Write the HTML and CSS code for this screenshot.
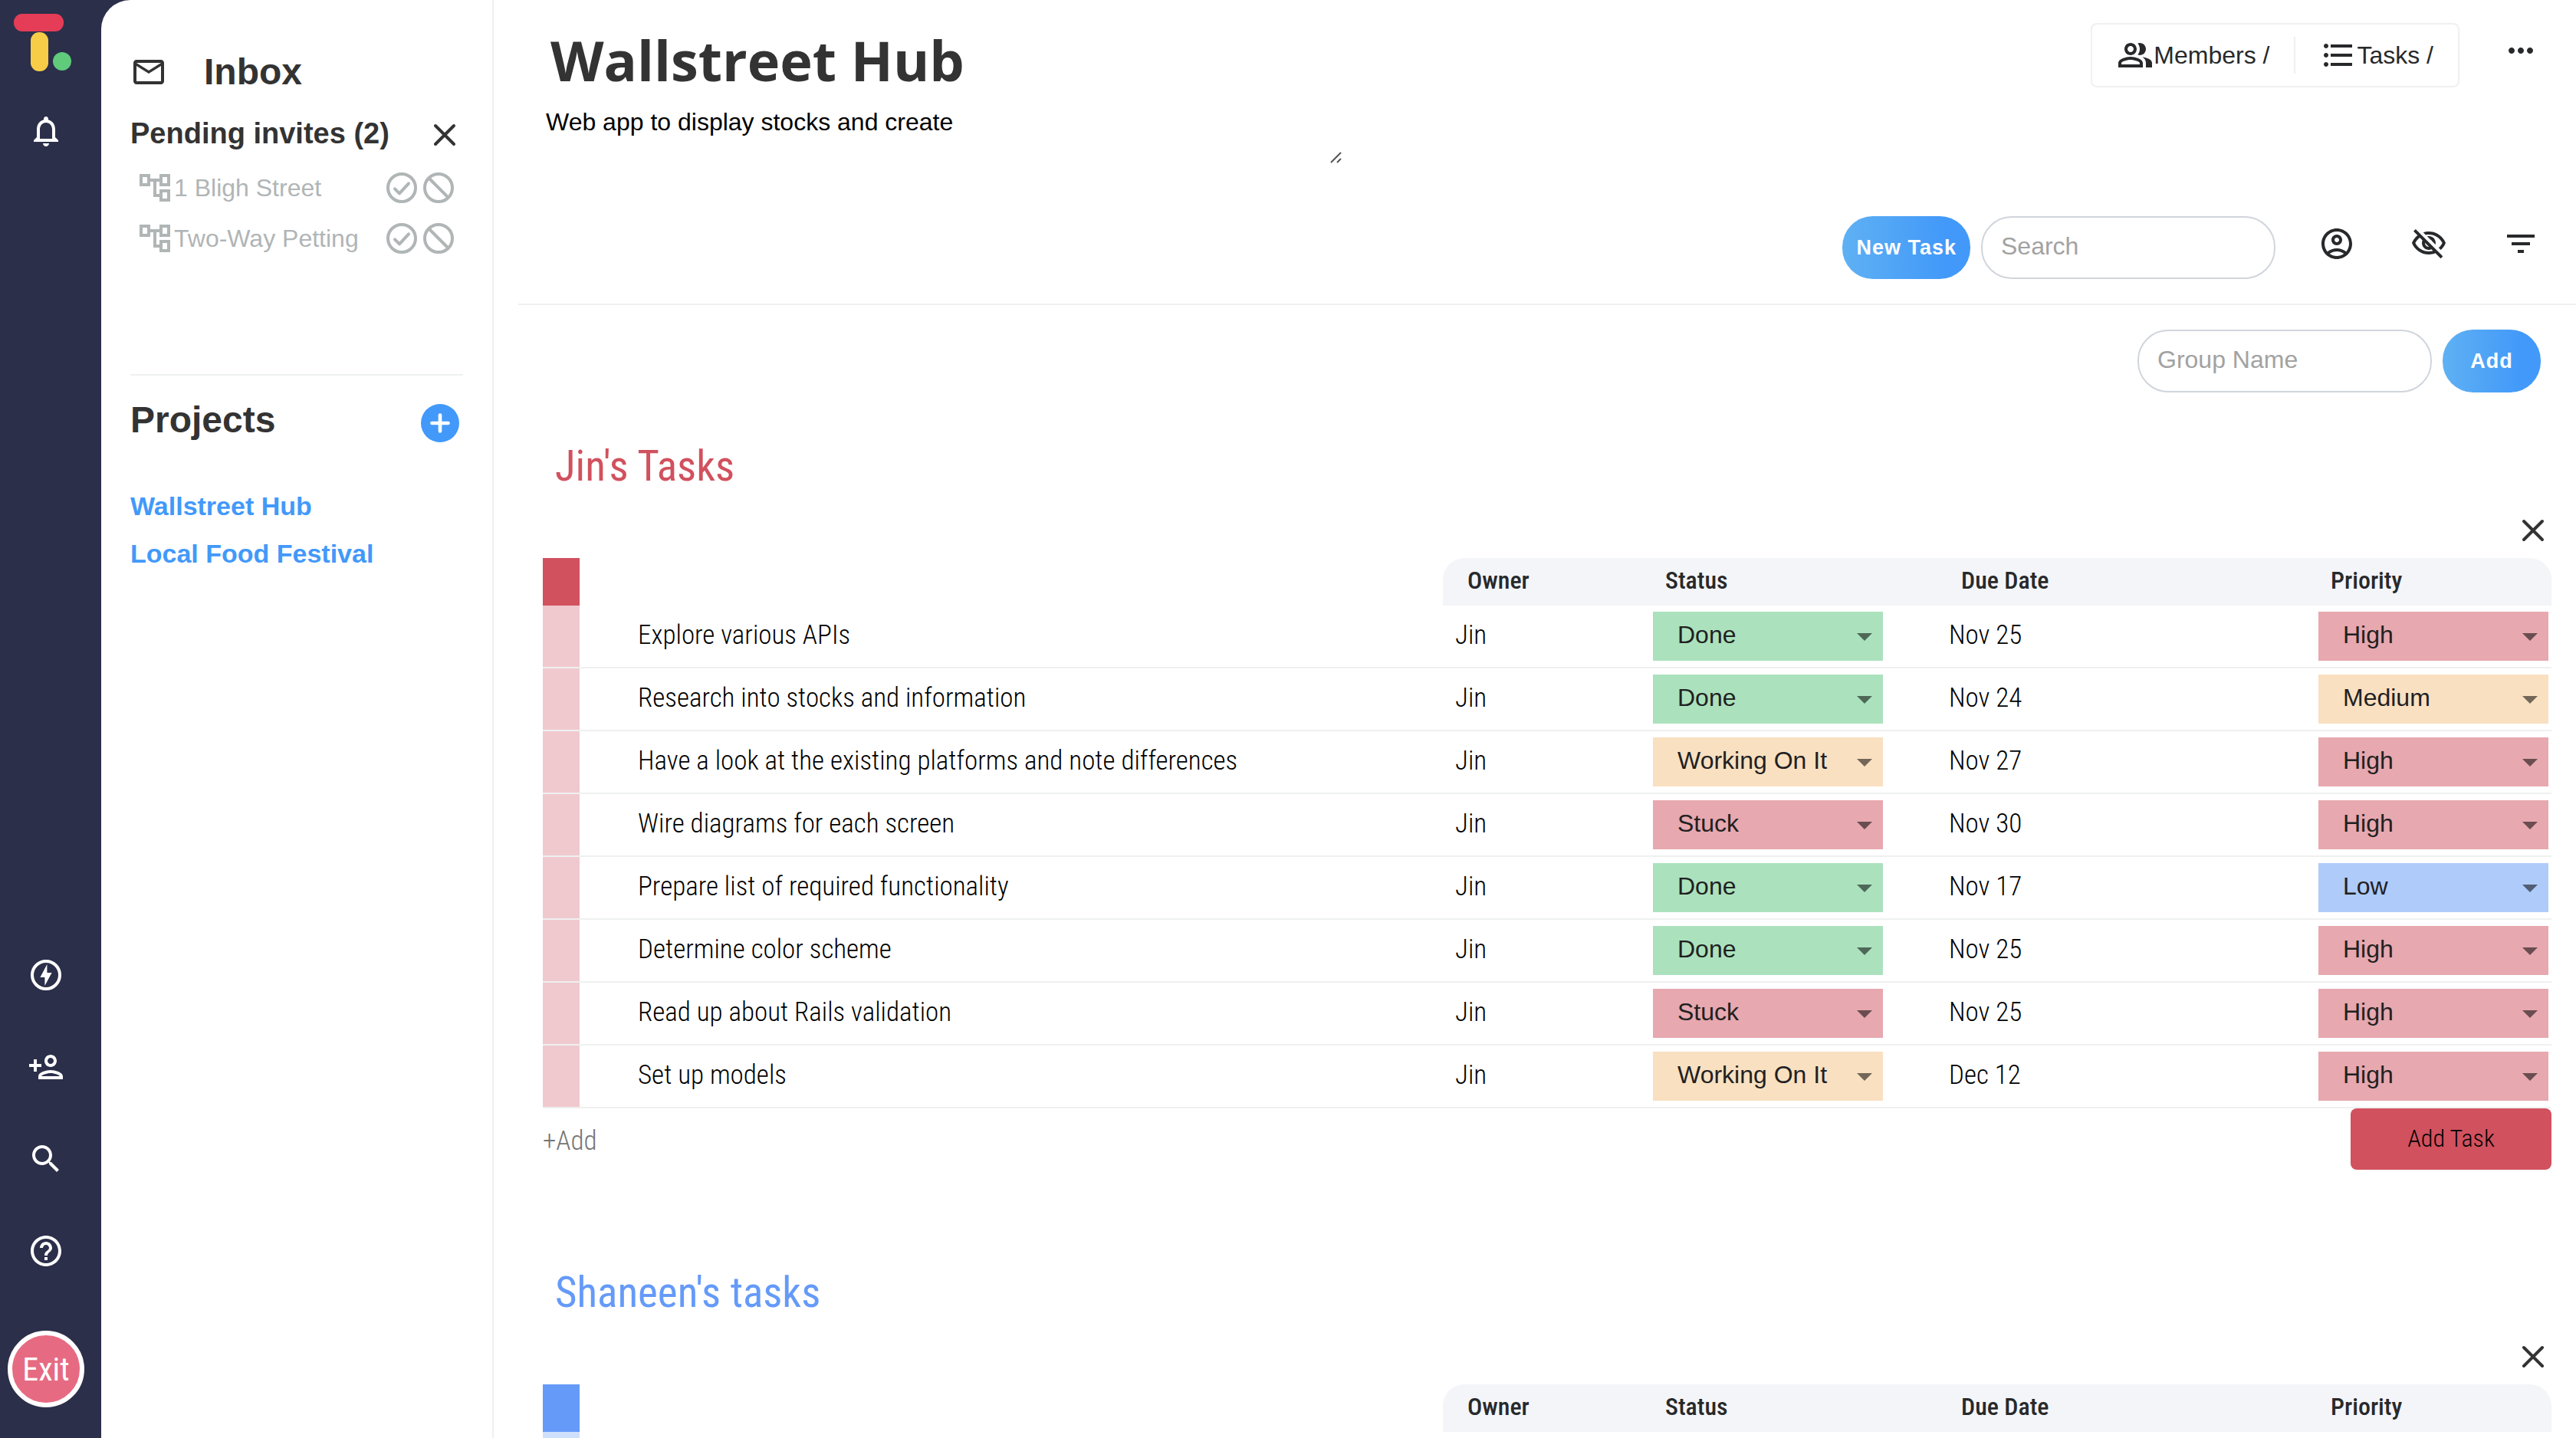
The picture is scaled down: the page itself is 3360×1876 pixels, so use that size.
FILE: index.html
```html
<!DOCTYPE html>
<html lang="en">
<head>
<meta charset="utf-8">
<title>Wallstreet Hub</title>
<meta name="viewport" content="width=device-width, initial-scale=1">
<link rel="stylesheet" href="styles.css">
</head>
<body>
<svg class="sprite" aria-hidden="true">
  <symbol id="close" viewBox="0 0 24 24"><path d="M6 6l12 12M18 6L6 18" fill="none" stroke="currentColor" stroke-width="2" stroke-linecap="round"/></symbol>
  <symbol id="tree" viewBox="0 0 24 24"><path d="M22 11V3h-7v3H9V3H2v8h7V8h2v10h4v3h7v-8h-7v3h-2V8h2v3h7zM7 9H4V5h3v4zm10 6h3v4h-3v-4zm0-10h3v4h-3V5z"/></symbol>
  <symbol id="accept" viewBox="0 0 24 24"><g fill="none" stroke="currentColor" stroke-width="2"><circle cx="12" cy="12" r="9"/><path d="M7.500 12.700l3 3 6-6.500" stroke-linecap="round" stroke-linejoin="round"/></g></symbol>
  <symbol id="decline" viewBox="0 0 24 24"><g fill="none" stroke="currentColor" stroke-width="2"><circle cx="12" cy="12" r="9"/><path d="M5.640 5.640l12.720 12.720"/></g></symbol>
</svg>
<div class="app">
  <nav class="rail" aria-label="Main">
    <svg class="logo" viewBox="0 0 80 80" role="img" aria-label="Logo">
      <rect x="0" y="2" width="65" height="23" rx="11" fill="#e53d57"/>
      <rect x="22" y="26" width="23" height="51" rx="11" fill="#f7cd48"/>
      <circle cx="63" cy="64" r="12" fill="#5fcb7b"/>
    </svg>
    <button class="icon-btn bell" aria-label="Notifications"><svg viewBox="0 0 24 24"><path d="M12 22c1.100 0 2-.9 2-2h-4c0 1.100.9 2 2 2zm6-6v-5c0-3.070-1.630-5.640-4.500-6.320V4c0-.83-.67-1.500-1.500-1.500s-1.500.67-1.500 1.500v.68C7.640 5.360 6 7.920 6 11v5l-2 2v1h16v-1l-2-2zm-2 1H8v-6c0-2.480 1.510-4.500 4-4.500s4 2.020 4 4.500v6z"/></svg></button>
    <div class="rail-bottom">
      <button class="icon-btn" aria-label="Activity"><svg viewBox="0 0 24 24"><circle cx="12" cy="12" r="9" fill="none" stroke="currentColor" stroke-width="2"/><path d="M12.700 5L8.200 13.500h3V19l4.600-8.500h-3.100z"/></svg></button>
      <button class="icon-btn" aria-label="Invite"><svg viewBox="0 0 24 24"><path d="M15 12c2.210 0 4-1.790 4-4s-1.790-4-4-4-4 1.790-4 4 1.790 4 4 4zm0-6c1.100 0 2 .9 2 2s-.9 2-2 2-2-.9-2-2 .9-2 2-2zm0 8c-2.670 0-8 1.340-8 4v2h16v-2c0-2.660-5.330-4-8-4zm-6 4c.22-.72 3.310-2 6-2 2.700 0 5.800 1.290 6 2H9zm-3-3v-3h3v-2H6V7H4v3H1v2h3v3z"/></svg></button>
      <button class="icon-btn" aria-label="Search"><svg viewBox="0 0 24 24"><path d="M15.500 14h-.79l-.28-.27C15.410 12.590 16 11.110 16 9.500 16 5.910 13.090 3 9.500 3S3 5.910 3 9.500 5.910 16 9.500 16c1.610 0 3.090-.59 4.230-1.570l.27.28v.79l5 4.990L20.490 19l-4.990-5zm-6 0C7.010 14 5 11.990 5 9.500S7.010 5 9.500 5 14 7.010 14 9.500 11.990 14 9.500 14z"/></svg></button>
      <button class="icon-btn" aria-label="Help"><svg viewBox="0 0 24 24"><path d="M11 18h2v-2h-2v2zm1-16C6.480 2 2 6.480 2 12s4.480 10 10 10 10-4.480 10-10S17.520 2 12 2zm0 18c-4.410 0-8-3.590-8-8s3.590-8 8-8 8 3.590 8 8-3.590 8-8 8zm0-14c-2.210 0-4 1.790-4 4h2c0-1.100.9-2 2-2s2 .9 2 2c0 2-3 1.750-3 5h2c0-2.250 3-2.500 3-5 0-2.210-1.790-4-4-4z"/></svg></button>
      <button class="exit">Exit</button>
    </div>
  </nav>

  <aside class="sidebar">
    <section class="inbox">
      <div class="inbox-head">
        <svg class="icon" viewBox="0 0 24 24" aria-hidden="true"><path d="M22 6c0-1.100-.9-2-2-2H4c-1.100 0-2 .9-2 2v12c0 1.100.9 2 2 2h16c1.100 0 2-.9 2-2V6zm-2 0l-8 5-8-5h16zm0 12H4V8l8 5 8-5v10z"/></svg>
        <h2>Inbox</h2>
      </div>
      <div class="pending-head">
        <h3>Pending invites (2)</h3>
        <button class="icon-btn" aria-label="Close invites"><svg><use href="#close"/></svg></button>
      </div>
      <ul class="invites">
        <li><svg class="icon" aria-hidden="true"><use href="#tree"/></svg><span>1 Bligh Street</span><button class="icon-btn" aria-label="Accept"><svg><use href="#accept"/></svg></button><button class="icon-btn" aria-label="Decline"><svg><use href="#decline"/></svg></button></li>
        <li><svg class="icon" aria-hidden="true"><use href="#tree"/></svg><span>Two-Way Petting</span><button class="icon-btn" aria-label="Accept"><svg><use href="#accept"/></svg></button><button class="icon-btn" aria-label="Decline"><svg><use href="#decline"/></svg></button></li>
      </ul>
    </section>
    <section class="projects">
      <div class="projects-head">
        <h2>Projects</h2>
        <button class="plus" aria-label="New project"><svg viewBox="0 0 24 24"><path d="M12 3v18M3 12h18" fill="none" stroke="currentColor" stroke-width="4" stroke-linecap="round"/></svg></button>
      </div>
      <a href="#wallstreet">Wallstreet Hub</a>
      <a href="#festival">Local Food Festival</a>
    </section>
  </aside>

  <main class="main">
    <header class="project-header">
      <div class="project-info">
        <h1>Wallstreet Hub</h1>
        <div class="description">
          <textarea aria-label="Description" spellcheck="false">Web app to display stocks and create</textarea>
          <svg class="grip" viewBox="0 0 18 16" aria-hidden="true"><path d="M2 14L15 1M10 14l5-5" fill="none" stroke="#555" stroke-width="2"/></svg>
        </div>
      </div>
      <div class="project-actions">
        <div class="summary-row">
          <div class="summary">
            <a href="#members"><svg class="icon" viewBox="0 0 24 24" aria-hidden="true"><path d="M16.670 13.130C18.040 14.060 19 15.320 19 17v3h4v-3c0-2.180-3.570-3.470-6.330-3.870zM15 12c2.210 0 4-1.790 4-4s-1.790-4-4-4c-.47 0-.91.1-1.330.24C14.500 5.270 15 6.580 15 8s-.5 2.730-1.330 3.760c.42.14.86.24 1.330.24zM9 12c2.210 0 4-1.790 4-4s-1.790-4-4-4-4 1.790-4 4 1.790 4 4 4zm0-6c1.100 0 2 .9 2 2s-.9 2-2 2-2-.9-2-2 .9-2 2-2zM9 13c-2.670 0-8 1.340-8 4v3h16v-3c0-2.660-5.330-4-8-4zm6 5H3v-.99C3.200 16.290 6.300 15 9 15s5.800 1.280 6 2v1z"/></svg>Members /</a>
            <a href="#tasks"><svg class="icon" viewBox="0 0 24 24" aria-hidden="true"><path d="M4 10.500c-.83 0-1.500.67-1.500 1.500s.67 1.500 1.500 1.500 1.500-.67 1.500-1.500-.67-1.500-1.500-1.500zm0-6c-.83 0-1.500.67-1.500 1.500S3.170 7.500 4 7.500 5.500 6.830 5.500 6 4.830 4.500 4 4.500zm0 12c-.83 0-1.500.68-1.500 1.500s.68 1.500 1.500 1.500 1.500-.68 1.500-1.500-.67-1.500-1.500-1.500zM7 19h14v-2H7v2zm0-6h14v-2H7v2zm0-8v2h14V5H7z"/></svg>Tasks /</a>
          </div>
          <button class="icon-btn" aria-label="More"><svg viewBox="0 0 24 24"><path d="M6 10c-1.100 0-2 .9-2 2s.9 2 2 2 2-.9 2-2-.9-2-2-2zm12 0c-1.100 0-2 .9-2 2s.9 2 2 2 2-.9 2-2-.9-2-2-2zm-6 0c-1.100 0-2 .9-2 2s.9 2 2 2 2-.9 2-2-.9-2-2-2z"/></svg></button>
        </div>
        <div class="toolbar">
          <button class="pill">New Task</button>
          <input class="field" type="text" placeholder="Search" aria-label="Search">
          <div class="tools">
            <button class="icon-btn" aria-label="Person"><svg viewBox="0 0 24 24"><path d="M12 2C6.480 2 2 6.480 2 12s4.480 10 10 10 10-4.480 10-10S17.520 2 12 2zM7.350 18.500C8.660 17.560 10.260 17 12 17s3.340.56 4.650 1.500C15.340 19.440 13.740 20 12 20s-3.340-.56-4.650-1.500zm10.790-1.380C16.450 15.800 14.320 15 12 15s-4.450.8-6.140 2.120C4.700 15.730 4 13.950 4 12c0-4.420 3.580-8 8-8s8 3.580 8 8c0 1.950-.7 3.730-1.860 5.120zM12 6c-1.930 0-3.500 1.570-3.500 3.500S10.070 13 12 13s3.500-1.570 3.500-3.500S13.930 6 12 6zm0 5c-.83 0-1.500-.67-1.500-1.500S11.170 8 12 8s1.500.67 1.500 1.500S12.830 11 12 11z"/></svg></button>
            <button class="icon-btn" aria-label="Hide"><svg viewBox="0 0 24 24"><path d="M12 6c3.790 0 7.170 2.130 8.820 5.500-.59 1.220-1.420 2.270-2.410 3.120l1.410 1.410c1.390-1.230 2.490-2.770 3.180-4.530C21.270 7.110 17 4 12 4c-1.270 0-2.490.2-3.640.57l1.650 1.650C10.660 6.090 11.320 6 12 6zm-1.070 1.140L13 9.210c.57.25 1.030.71 1.280 1.280l2.070 2.070c.08-.34.14-.7.14-1.070C16.500 9.010 14.480 7 12 7c-.37 0-.72.05-1.070.14zM2.010 3.870l2.680 2.680C3.060 7.830 1.770 9.530 1 11.500 2.730 15.890 7 19 12 19c1.520 0 2.980-.29 4.320-.82l3.420 3.420 1.410-1.410L3.420 2.450 2.010 3.870zm7.500 7.500l2.610 2.610c-.04.01-.08.02-.12.02-1.380 0-2.500-1.120-2.500-2.500 0-.05.01-.08.01-.13zm-3.400-3.400l1.750 1.750c-.23.55-.36 1.150-.36 1.780 0 2.480 2.020 4.500 4.500 4.500.63 0 1.230-.13 1.770-.36l.98.98c-.88.24-1.800.38-2.750.38-3.790 0-7.170-2.130-8.820-5.500.7-1.430 1.720-2.610 2.930-3.530z"/></svg></button>
            <button class="icon-btn" aria-label="Filter"><svg viewBox="0 0 24 24"><path d="M10 18h4v-2h-4v2zM3 6v2h18V6H3zm3 7h12v-2H6v2z"/></svg></button>
          </div>
        </div>
      </div>
    </header>

    <div class="new-group">
      <input class="field" type="text" placeholder="Group Name" aria-label="Group name">
      <button class="pill">Add</button>
    </div>

    <section class="group red">
      <h2 class="group-title">Jin's Tasks</h2>
      <div class="group-close"><button class="icon-btn" aria-label="Delete group"><svg><use href="#close"/></svg></button></div>
      <table>
        <colgroup><col class="c-mark"><col><col class="c-owner"><col class="c-status"><col class="c-date"><col class="c-priority"></colgroup>
        <thead><tr><td class="mark"></td><td></td><th>Owner</th><th>Status</th><th>Due Date</th><th>Priority</th></tr></thead>
        <tbody>
          <tr><td class="mark"></td><td class="name">Explore various APIs</td><td>Jin</td><td class="pick"><div class="select green"><select aria-label="Status"><option selected>Done</option><option>Working On It</option><option>Stuck</option></select></div></td><td>Nov 25</td><td class="pick"><div class="select rose"><select aria-label="Priority"><option selected>High</option><option>Medium</option><option>Low</option></select></div></td></tr>
          <tr><td class="mark"></td><td class="name">Research into stocks and information</td><td>Jin</td><td class="pick"><div class="select green"><select aria-label="Status"><option selected>Done</option><option>Working On It</option><option>Stuck</option></select></div></td><td>Nov 24</td><td class="pick"><div class="select sand"><select aria-label="Priority"><option>High</option><option selected>Medium</option><option>Low</option></select></div></td></tr>
          <tr><td class="mark"></td><td class="name">Have a look at the existing platforms and note differences</td><td>Jin</td><td class="pick"><div class="select sand"><select aria-label="Status"><option>Done</option><option selected>Working On It</option><option>Stuck</option></select></div></td><td>Nov 27</td><td class="pick"><div class="select rose"><select aria-label="Priority"><option selected>High</option><option>Medium</option><option>Low</option></select></div></td></tr>
          <tr><td class="mark"></td><td class="name">Wire diagrams for each screen</td><td>Jin</td><td class="pick"><div class="select rose"><select aria-label="Status"><option>Done</option><option>Working On It</option><option selected>Stuck</option></select></div></td><td>Nov 30</td><td class="pick"><div class="select rose"><select aria-label="Priority"><option selected>High</option><option>Medium</option><option>Low</option></select></div></td></tr>
          <tr><td class="mark"></td><td class="name">Prepare list of required functionality</td><td>Jin</td><td class="pick"><div class="select green"><select aria-label="Status"><option selected>Done</option><option>Working On It</option><option>Stuck</option></select></div></td><td>Nov 17</td><td class="pick"><div class="select sky"><select aria-label="Priority"><option>High</option><option>Medium</option><option selected>Low</option></select></div></td></tr>
          <tr><td class="mark"></td><td class="name">Determine color scheme</td><td>Jin</td><td class="pick"><div class="select green"><select aria-label="Status"><option selected>Done</option><option>Working On It</option><option>Stuck</option></select></div></td><td>Nov 25</td><td class="pick"><div class="select rose"><select aria-label="Priority"><option selected>High</option><option>Medium</option><option>Low</option></select></div></td></tr>
          <tr><td class="mark"></td><td class="name">Read up about Rails validation</td><td>Jin</td><td class="pick"><div class="select rose"><select aria-label="Status"><option>Done</option><option>Working On It</option><option selected>Stuck</option></select></div></td><td>Nov 25</td><td class="pick"><div class="select rose"><select aria-label="Priority"><option selected>High</option><option>Medium</option><option>Low</option></select></div></td></tr>
          <tr><td class="mark"></td><td class="name">Set up models</td><td>Jin</td><td class="pick"><div class="select sand"><select aria-label="Status"><option>Done</option><option selected>Working On It</option><option>Stuck</option></select></div></td><td>Dec 12</td><td class="pick"><div class="select rose"><select aria-label="Priority"><option selected>High</option><option>Medium</option><option>Low</option></select></div></td></tr>
        </tbody>
      </table>
      <div class="group-foot">
        <input type="text" placeholder="+Add" aria-label="New task name">
        <button>Add Task</button>
      </div>
    </section>

    <section class="group blue">
      <h2 class="group-title">Shaneen's tasks</h2>
      <div class="group-close"><button class="icon-btn" aria-label="Delete group"><svg><use href="#close"/></svg></button></div>
      <table>
        <colgroup><col class="c-mark"><col><col class="c-owner"><col class="c-status"><col class="c-date"><col class="c-priority"></colgroup>
        <thead><tr><td class="mark"></td><td></td><th>Owner</th><th>Status</th><th>Due Date</th><th>Priority</th></tr></thead>
        <tbody><tr><td class="mark"></td><td class="name"></td><td></td><td></td><td></td><td></td></tr></tbody>
      </table>
    </section>
  </main>
</div>
</body>
</html>
```

FILE: styles.css
```css
:root {
  --sans: "Liberation Sans", Arial, sans-serif;
  --narrow: "Roboto Condensed", "Liberation Sans Narrow", "Liberation Sans", sans-serif;
  --ink: #333;
  --line: #eff0f0;
  --blue: #4299f9;
}
* { box-sizing: border-box; }
body { margin: 0; font-family: var(--sans); font-size: 32px; color: #000; background: #fff; }
h1, h2, h3, ul { margin: 0; padding: 0; }
button, input, select, textarea { font: inherit; color: inherit; border: 0; margin: 0; padding: 0; background: none; outline: 0; }
a { text-decoration: none; color: inherit; }
.sprite { display: none; }
.icon, .icon-btn svg { display: block; width: 48px; height: 48px; fill: currentColor; flex: none; }
.icon-btn { display: block; flex: none; cursor: pointer; }

.app { display: flex; height: 100vh; background: #2b2f4a; overflow: hidden; }

.rail { flex: none; width: 132px; padding: 16px 12px 40px 0; display: flex; flex-direction: column; align-items: center; color: #fff; }
.logo { width: 80px; height: 80px; align-self: flex-start; margin-left: 18px; }
.bell { margin-top: 51px; }
.rail-bottom { margin-top: auto; display: flex; flex-direction: column; align-items: center; gap: 72px; }
.exit { width: 100px; height: 100px; margin-top: 8px; border: 6px solid #fff; border-radius: 50%; background: #e66b82; font-family: var(--narrow); font-size: 42px; }

.sidebar { flex: none; width: 512px; padding: 66px 38px 0; background: #fff; border-right: 2px solid var(--line); border-top-left-radius: 38px; color: var(--ink); }
.sidebar h2 { font-size: 48px; line-height: 56px; }
.inbox { height: 424px; border-bottom: 2px solid var(--line); }
.inbox-head { display: flex; align-items: center; gap: 48px; }
.pending-head { display: flex; align-items: center; justify-content: space-between; height: 48px; margin-top: 30px; }
.pending-head h3 { padding-bottom: 4px; font-size: 38px; line-height: 44px; white-space: nowrap; }
.invites { list-style: none; padding: 12px 8px; color: #b0b5b6; }
.invites li { display: flex; align-items: center; height: 66px; }
.invites span { flex: 1; padding-left: 1px; white-space: nowrap; }
.projects { display: flex; flex-direction: column; }
.projects-head { display: flex; align-items: center; justify-content: space-between; height: 124px; margin-bottom: 15px; padding-right: 5px; }
.projects-head h2 { padding-bottom: 8px; }
.plus { width: 50px; height: 50px; border-radius: 50%; background: var(--blue); color: #fff; display: grid; place-items: center; }
.plus svg { width: 28px; height: 28px; }
.projects a { font-size: 34px; line-height: 62px; font-weight: 700; color: var(--blue); }

.main { flex: 1; min-width: 0; background: #fff; overflow-y: auto; scrollbar-width: none; }

.project-header { display: flex; justify-content: space-between; margin-left: 32px; padding: 30px 48px 32px 32px; border-bottom: 2px solid var(--line); }
.project-info h1 { padding-left: 10px; font: 700 72px/96px "Open Sans", "Noto Sans", sans-serif; color: var(--ink); }
.description { position: relative; width: 1044px; margin-top: 10px; }
.description textarea { display: block; width: 100%; height: 80px; padding: 4px; line-height: 38px; resize: none; overflow: hidden; }
.grip { position: absolute; right: 0; bottom: 2px; width: 18px; height: 16px; }
.project-actions { display: flex; flex-direction: column; gap: 168px; color: #28292b; }
.summary-row { display: flex; justify-content: flex-end; gap: 56px; }
.summary-row .icon-btn { padding: 12px 0 24px; }
.summary { display: flex; align-items: center; height: 84px; border: 2px solid var(--line); border-radius: 8px; }
.summary a { display: flex; align-items: center; padding: 0 32px; white-space: nowrap; line-height: 48px; }
.summary a + a { border-left: 2px solid var(--line); }
.toolbar { display: flex; gap: 14px; }
.tools { display: flex; gap: 72px; padding: 12px 0 22px; margin-left: 42px; }
.pill { height: 82px; min-width: 128px; padding: 0 18px; border-radius: 40px; background: linear-gradient(90deg, #5fb1f3, var(--blue) 80%); color: #fff; font-weight: 700; font-size: 27px; letter-spacing: 1px; white-space: nowrap; }
.field { width: 384px; height: 82px; padding: 0 24px 4px; border: 2px solid #d0d5dc; border-radius: 40px; color: #000; }
.field::placeholder { color: #a2a2a2; opacity: 1; }
.new-group { display: flex; justify-content: flex-end; gap: 14px; padding: 32px 46px 48px; }

.group { margin: 0 32px 112px 64px; font-family: var(--narrow); font-size: 35px; font-weight: 300; }
.red { --strong: #d1515e; --soft: #f0c9cf; }
.blue { --strong: #659af8; --soft: #cfe0fc; }
.group-title { padding-left: 16px; font-size: 55px; line-height: 96px; font-weight: 400; color: var(--strong); }
.group-close { display: flex; justify-content: flex-end; height: 72px; padding: 6px 0; color: var(--ink); }
.group table { width: 100%; table-layout: fixed; border-collapse: separate; border-spacing: 0; }
.c-mark { width: 48px; }
.c-owner { width: 258px; }
.c-status { width: 386px; }
.c-date { width: 482px; }
.c-priority { width: 320px; }
.group th { height: 62px; padding: 0 32px 4px; background: #f4f5f8; text-align: left; font-size: 32px; font-weight: 500; color: #28292b; }
.group th:nth-child(3) { border-top-left-radius: 28px; }
.group th:last-child { border-top-right-radius: 28px; }
.group td { padding: 0; }
.group tbody td { height: 82px; padding: 0 4px 4px 16px; border-bottom: 2px solid var(--line); white-space: nowrap; }
.group tbody .pick { padding-bottom: 0; }
.group thead .mark { background: var(--strong); }
.group tbody .mark { background: var(--soft); background-clip: padding-box; }
.group tbody .name { padding-left: 76px; }
.select { position: relative; width: 300px; height: 64px; font: 32px/60px var(--sans); color: #212121; }
.select::after { content: ""; position: absolute; right: 14px; top: 28px; border: 10px solid transparent; border-top-color: rgba(0, 0, 0, .54); border-bottom: 0; pointer-events: none; }
.select select { display: block; width: 100%; height: 64px; padding: 0 48px 6px 32px; appearance: none; }
.green { background: #abe2bd; }
.sand { background: #f9e0c1; }
.rose { background: #e7a8af; }
.sky { background: #afcbfa; }
.group-foot { display: flex; justify-content: space-between; }
.group-foot input { width: 600px; height: 80px; padding-top: 4px; }
.group-foot input::placeholder { color: #757575; opacity: 1; }
.group-foot button { width: 262px; height: 80px; border-radius: 8px; background: var(--strong); font-size: 32px; padding-bottom: 2px; color: #000; }
```
